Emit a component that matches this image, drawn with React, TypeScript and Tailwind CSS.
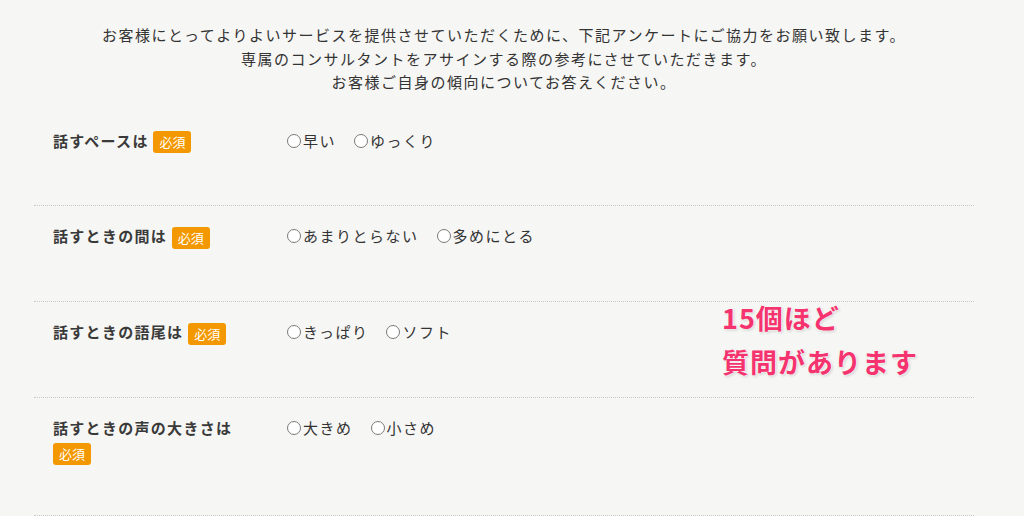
import React from 'react';

const font = { fontFamily: '"Noto Sans CJK JP", "Noto Sans", sans-serif' };

type Question = { label: string; options: string[] };

const questions: Question[] = [
  { label: '話すペースは', options: ['早い', 'ゆっくり'] },
  { label: '話すときの間は', options: ['あまりとらない', '多めにとる'] },
  { label: '話すときの語尾は', options: ['きっぱり', 'ソフト'] },
  { label: '話すときの声の大きさは', options: ['大きめ', '小さめ'] },
];

const Badge: React.FC = () => (
  <span className="inline-block align-middle rounded-[3px] bg-[#f39800] px-[6px] text-[13px] font-normal leading-[22px] tracking-normal text-white">
    必須
  </span>
);

const Radio: React.FC<{ text: string }> = ({ text }) => (
  <label className="flex h-[24px] items-center gap-[2px]">
    <span className="inline-block h-[14px] w-[14px] rounded-full border border-[#7a7a7a] bg-white" />
    <span>{text}</span>
  </label>
);

export default function App() {
  return (
    <div className="relative min-h-[516px] w-full overflow-hidden bg-[#f6f6f4] text-[#333]" style={font}>
      <div className="pr-[16px] pt-[23px] text-center text-[15px] leading-[23.5px] tracking-[1.5px]">
        <p>お客様にとってよりよいサービスを提供させていただくために、下記アンケートにご協力をお願い致します。</p>
        <p>専属のコンサルタントをアサインする際の参考にさせていただきます。</p>
        <p>お客様ご自身の傾向についてお答えください。</p>
      </div>

      <div className="mx-[34px] mt-[17px] w-[940px]">
        {questions.map((q, i) => (
          <div
            key={q.label}
            className={
              i === questions.length - 1
                ? 'flex items-start border-b border-dotted border-[#c8c8c8] pb-[50px] pl-[19px] pt-[18px]'
                : 'flex items-start border-b border-dotted border-[#c8c8c8] pb-[52px] pl-[19px] pt-[18px]'
            }
          >
            <div className="w-[215px] text-[15px] font-bold leading-[24px] tracking-[1.3px] text-[#3a3a3a]">
              {q.label} <Badge />
            </div>
            <div className="ml-[19px] flex items-start gap-[18px] text-[15px] leading-[24px] tracking-[1.5px]">
              {q.options.map((o) => (
                <Radio key={o} text={o} />
              ))}
            </div>
          </div>
        ))}
      </div>

      <div
        className="absolute left-[722px] top-[296px] text-[27px] font-bold leading-[44px] tracking-[1px] text-[#f5336f]"
        style={{ textShadow: '0 0 2px #fff, 0 0 3px #fff, 1px 1px 3px rgba(0,0,0,0.25)' }}
      >
        <p>15個ほど</p>
        <p>質問があります</p>
      </div>
    </div>
  );
}
